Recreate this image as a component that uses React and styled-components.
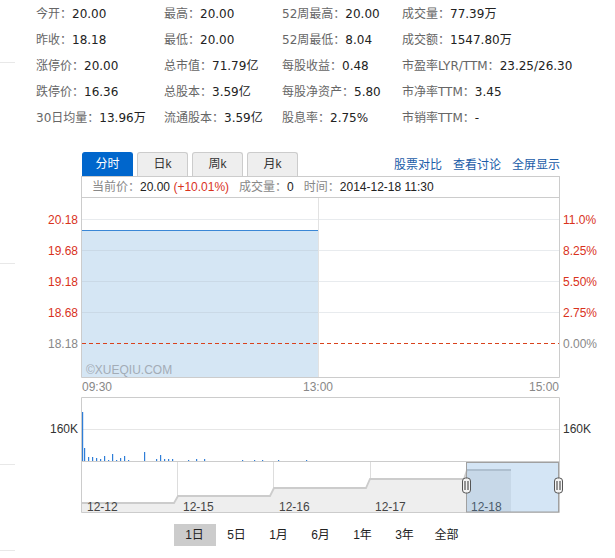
import styled, { createGlobalStyle } from "styled-components";

const GlobalStyle = createGlobalStyle`
  body {
    margin: 0;
    background: #fff;
    font-family: "DejaVu Sans", "Noto Sans CJK SC", sans-serif;
  }
`;

const CHART_FONT = `"Liberation Sans", "Noto Sans CJK SC", sans-serif`;
const RED = "#d9321c";

const stats = [
  [["今开", "20.00"], ["最高", "20.00"], ["52周最高", "20.00"], ["成交量", "77.39万"]],
  [["昨收", "18.18"], ["最低", "20.00"], ["52周最低", "8.04"], ["成交额", "1547.80万"]],
  [["涨停价", "20.00"], ["总市值", "71.79亿"], ["每股收益", "0.48"], ["市盈率LYR/TTM", "23.25/26.30"]],
  [["跌停价", "16.36"], ["总股本", "3.59亿"], ["每股净资产", "5.80"], ["市净率TTM", "3.45"]],
  [["30日均量", "13.96万"], ["流通股本", "3.59亿"], ["股息率", "2.75%"], ["市销率TTM", "-"]],
];

const tabs = ["分时", "日k", "周k", "月k"];
const links = ["股票对比", "查看讨论", "全屏显示"];
const ranges = ["1日", "5日", "1月", "6月", "1年", "3年", "全部"];

// volume bars: [x, height]
const bars = [
  [82, 50], [84, 14], [88, 5], [92, 5], [96, 4], [100, 3], [104, 6], [108, 2], [112, 8],
  [116, 2], [120, 4], [124, 6], [128, 2], [132, 1], [136, 1], [140, 1], [144, 10], [148, 1],
  [152, 1], [156, 3], [160, 7], [164, 3], [168, 3], [172, 3], [176, 1], [180, 1], [188, 2],
  [192, 1], [196, 3], [200, 1], [204, 3], [208, 1], [212, 1], [216, 1], [224, 1], [228, 1],
  [232, 1], [242, 2], [246, 1], [250, 1], [254, 2], [258, 1], [262, 2], [266, 1], [270, 1],
  [274, 1], [278, 2], [282, 1], [290, 1], [294, 1], [298, 1], [302, 1], [306, 2], [310, 1],
  [314, 1],
];

const priceRows = [
  { y: 219.5, left: "20.18", right: "11.0%", red: true },
  { y: 250.5, left: "19.68", right: "8.25%", red: true },
  { y: 281.5, left: "19.18", right: "5.50%", red: true },
  { y: 312.5, left: "18.68", right: "2.75%", red: true },
  { y: 343.5, left: "18.18", right: "0.00%", red: false },
];

const days = [
  { label: "12-12", x: 87 },
  { label: "12-15", x: 183 },
  { label: "12-16", x: 279 },
  { label: "12-17", x: 375 },
  { label: "12-18", x: 471 },
];

const App = () => {
  return (
    <>
      <GlobalStyle />
      <Page>
        <Gutter>
          <Rule $gap={62} />
          <Rule $gap={200} />
          <Rule $gap={200} />
          <Rule $gap={85} />
        </Gutter>
        <Main>
          <Stats>
            {stats.flat().map(([label, value]) => (
              <Stat key={label}>
                <StatLabel>{label}：</StatLabel>
                <StatValue>{value}</StatValue>
              </Stat>
            ))}
          </Stats>

          <ChartBox>
            <TabBar>
              {tabs.map((t, i) => (
                <Tab key={t} $active={i === 0}>
                  {t}
                </Tab>
              ))}
              <Links>
                {links.map((l) => (
                  <LinkItem key={l} href="#">
                    {l}
                  </LinkItem>
                ))}
              </Links>
            </TabBar>
            <InfoBar>
              <InfoGroup>
                <InfoLabel>当前价：</InfoLabel>
                <InfoValue>20.00</InfoValue> <InfoChange>(+10.01%)</InfoChange>
              </InfoGroup>
              <InfoGroup>
                <InfoLabel>成交量：</InfoLabel>
                <InfoValue>0</InfoValue>
              </InfoGroup>
              <InfoGroup>
                <InfoLabel>时间：</InfoLabel>
                <InfoValue>2014-12-18 11:30</InfoValue>
              </InfoGroup>
            </InfoBar>
          </ChartBox>

          <PriceChart />
          <VolumeChart />
          <Navigator />

          <Ranges>
            {ranges.map((r, i) => (
              <RangeButton key={r} $active={i === 0}>
                {r}
              </RangeButton>
            ))}
          </Ranges>
        </Main>
      </Page>
    </>
  );
};

const PriceChart = () => (
  <ChartSvg width="600" height="199" viewBox="15 198 600 199">
    <rect x="82" y="230" width="236" height="147.5" fill="#d5e6f4" />
    {priceRows.slice(0, 4).map((r) => (
      <line key={r.y} x1="82" x2="559" y1={r.y} y2={r.y} stroke="#b4bec8" strokeOpacity="0.3" />
    ))}
    <line x1="318.5" x2="318.5" y1="198" y2="377" stroke="#e2e2e2" />
    <line x1="82" x2="318" y1="230.5" y2="230.5" stroke="#3a87d6" />
    <line x1="82" x2="559" y1="343.5" y2="343.5" stroke="#d9421c" strokeDasharray="4 3" />
    <path d="M81.5 198 V377.5 H559.5 V198" fill="none" stroke="#cccccc" />
    <text x="86" y="374" fill="#a3acb6" fontSize="12">©XUEQIU.COM</text>
    {priceRows.map((r) => (
      <g key={r.left} fontSize="12" fill={r.red ? RED : "#888"}>
        <text x="78" y={r.y + 4} textAnchor="end">{r.left}</text>
        <text x="563" y={r.y + 4}>{r.right}</text>
      </g>
    ))}
    <g fontSize="12" fill="#888">
      <text x="82" y="391">09:30</text>
      <text x="318" y="391" textAnchor="middle">13:00</text>
      <text x="559" y="391" textAnchor="end">15:00</text>
    </g>
  </ChartSvg>
);

const VolumeChart = () => (
  <ChartSvg width="600" height="65" viewBox="15 397 600 65">
    <path d="M81.5 462 V397.5 H559.5 V462" fill="none" stroke="#cccccc" />
    <line x1="82" x2="559" y1="429.5" y2="429.5" stroke="#e6e6e6" />
    {bars.map(([x, h]) => (
      <rect key={x} x={x} y={462 - h} width="1.2" height={h} fill="#2f7ed8" />
    ))}
    <line x1="82" x2="559" y1="461.5" y2="461.5" stroke="#cccccc" />
    <g fontSize="12" fill="#333">
      <text x="78" y="433" textAnchor="end">160K</text>
      <text x="563" y="433">160K</text>
    </g>
  </ChartSvg>
);

const Handle = ({ x }) => (
  <g>
    <rect x={x - 4} y="478" width="8" height="15" rx="3" fill="#f4f4f4" stroke="#555" />
    <line x1={x - 1.5} x2={x - 1.5} y1="481" y2="490" stroke="#333" />
    <line x1={x + 1.5} x2={x + 1.5} y1="481" y2="490" stroke="#333" />
  </g>
);

const Navigator = () => (
  <ChartSvg width="600" height="51" viewBox="15 462 600 51">
    {[177.5, 273.5, 370.5].map((x) => (
      <line key={x} x1={x} x2={x} y1="462" y2="512" stroke="#dddddd" />
    ))}
    <path
      d="M82 512 V503 H174 L178 496 H270 L274 488 H366 L370 479 H464 L467 470 H511 V512 Z"
      fill="#eeeeee"
    />
    <path
      d="M82 503 H174 L178 496 H270 L274 488 H366 L370 479 H464 L467 470 H511"
      fill="none"
      stroke="#cccccc"
      strokeWidth="1.8"
    />
    <path d="M81.5 462 V512.5 H559.5 V462" fill="none" stroke="#cccccc" />
    {days.map((d) => (
      <text key={d.label} x={d.x} y="511" fontSize="12" fill="#444">
        {d.label}
      </text>
    ))}
    <rect x="466.5" y="462.5" width="92" height="49.5" fill="rgb(90,155,215)" fillOpacity="0.26" stroke="#a0a0a0" />
    <Handle x={466.5} />
    <Handle x={558.5} />
  </ChartSvg>
);

const Page = styled.div`
  display: flex;
  width: 615px;
`;

const Gutter = styled.div`
  width: 15px;
  display: flex;
  flex-direction: column;
`;

const Rule = styled.div`
  height: 1px;
  margin-top: ${(p) => p.$gap}px;
  background: #e8e8e8;
`;

const Main = styled.div`
  width: 600px;
  display: flex;
  flex-direction: column;
`;

const Stats = styled.div`
  display: grid;
  grid-template-columns: 128px 118px 120px auto;
  padding: 1px 0 0 21px;
  font-size: 12px;
  line-height: 26px;
`;

const Stat = styled.div`
  white-space: nowrap;
`;

const StatLabel = styled.span`
  color: #666;
`;

const StatValue = styled.span`
  color: #222;
`;

const ChartBox = styled.div`
  margin: 21px 0 0 66px;
  width: 479px;
  font-family: ${CHART_FONT};
  font-size: 12px;
`;

const TabBar = styled.div`
  display: flex;
  align-items: flex-end;
  gap: 4px;
  height: 24px;
  padding-left: 1px;
`;

const Tab = styled.div`
  box-sizing: border-box;
  width: 51px;
  height: 24px;
  line-height: 23px;
  text-align: center;
  border: 1px solid ${(p) => (p.$active ? "#0066cc" : "#cccccc")};
  border-bottom: none;
  border-radius: 3px 3px 0 0;
  background: ${(p) => (p.$active ? "#0066cc" : "#eeeeee")};
  color: ${(p) => (p.$active ? "#fff" : "#333")};
`;

const Links = styled.div`
  margin-left: auto;
  align-self: center;
  display: flex;
  gap: 11px;
  padding-bottom: 1px;
`;

const LinkItem = styled.a`
  color: #1a5ca8;
  text-decoration: none;
`;

const InfoBar = styled.div`
  box-sizing: border-box;
  display: flex;
  height: 22px;
  line-height: 20px;
  padding-left: 10px;
  border: 1px solid #cccccc;
  white-space: nowrap;
`;

const InfoGroup = styled.span`
  margin-right: 10px;
`;

const InfoLabel = styled.span`
  color: #888;
`;

const InfoValue = styled.span`
  color: #222;
`;

const InfoChange = styled.span`
  color: ${RED};
`;

const ChartSvg = styled.svg`
  display: block;
  font-family: ${CHART_FONT};
`;

const Ranges = styled.div`
  display: flex;
  justify-content: center;
  margin: 11px 0 0 66px;
  width: 479px;
  font-family: ${CHART_FONT};
  font-size: 12px;
`;

const RangeButton = styled.div`
  width: 42px;
  height: 22px;
  line-height: 22px;
  text-align: center;
  color: #222;
  background: ${(p) => (p.$active ? "#cccccc" : "transparent")};
`;

export default App;
